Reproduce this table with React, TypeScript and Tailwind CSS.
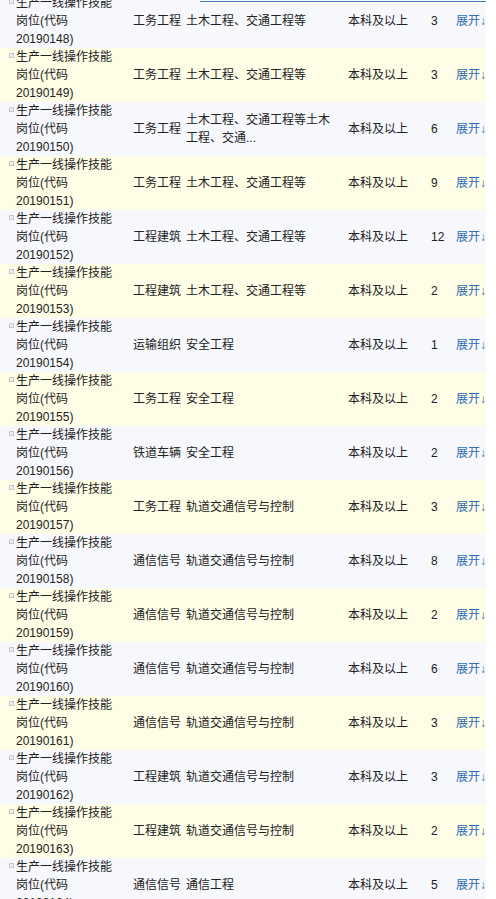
type Row = {
  code: string;
  dept: string;
  major: string[];
  edu: string;
  count: number;
};

const rows: Row[] = [
  { code: "20190148", dept: "工务工程", major: ["土木工程、交通工程等"], edu: "本科及以上", count: 3 },
  { code: "20190149", dept: "工务工程", major: ["土木工程、交通工程等"], edu: "本科及以上", count: 3 },
  { code: "20190150", dept: "工务工程", major: ["土木工程、交通工程等土木", "工程、交通..."], edu: "本科及以上", count: 6 },
  { code: "20190151", dept: "工务工程", major: ["土木工程、交通工程等"], edu: "本科及以上", count: 9 },
  { code: "20190152", dept: "工程建筑", major: ["土木工程、交通工程等"], edu: "本科及以上", count: 12 },
  { code: "20190153", dept: "工程建筑", major: ["土木工程、交通工程等"], edu: "本科及以上", count: 2 },
  { code: "20190154", dept: "运输组织", major: ["安全工程"], edu: "本科及以上", count: 1 },
  { code: "20190155", dept: "工务工程", major: ["安全工程"], edu: "本科及以上", count: 2 },
  { code: "20190156", dept: "铁道车辆", major: ["安全工程"], edu: "本科及以上", count: 2 },
  { code: "20190157", dept: "工务工程", major: ["轨道交通信号与控制"], edu: "本科及以上", count: 3 },
  { code: "20190158", dept: "通信信号", major: ["轨道交通信号与控制"], edu: "本科及以上", count: 8 },
  { code: "20190159", dept: "通信信号", major: ["轨道交通信号与控制"], edu: "本科及以上", count: 2 },
  { code: "20190160", dept: "通信信号", major: ["轨道交通信号与控制"], edu: "本科及以上", count: 6 },
  { code: "20190161", dept: "通信信号", major: ["轨道交通信号与控制"], edu: "本科及以上", count: 3 },
  { code: "20190162", dept: "工程建筑", major: ["轨道交通信号与控制"], edu: "本科及以上", count: 3 },
  { code: "20190163", dept: "工程建筑", major: ["轨道交通信号与控制"], edu: "本科及以上", count: 2 },
  { code: "20190164", dept: "通信信号", major: ["通信工程"], edu: "本科及以上", count: 5 },
];

function JobRow({ row, striped }: { readonly row: Row; readonly striped: boolean }) {
  return (
    <div
      className={`grid h-[54px] grid-cols-[130px_53px_157px_85px_28px_33px] items-center ${
        striped ? "bg-[#fefde6]" : "bg-[#f7f8fc]"
      }`}
    >
      <div className="relative flex h-full flex-col justify-center pl-[16px]">
        <span className="absolute left-[9px] top-[5px] h-[5px] w-[5px] border border-[#c9c9c9] bg-[#efefef]" />
        <span>生产一线操作技能</span>
        <span>岗位(代码</span>
        <span>{row.code})</span>
      </div>
      <div className="pl-[3px]">{row.dept}</div>
      <div className="flex flex-col pl-[3px]">
        {row.major.map((m) => (
          <span key={m}>{m}</span>
        ))}
      </div>
      <div className="pl-[8px]">{row.edu}</div>
      <div className="pl-[6px]">{row.count}</div>
      <div className="whitespace-nowrap pl-[3px] text-[#2f6db3]">展开↓</div>
    </div>
  );
}

export default function App() {
  return (
    <div className="relative h-[899px] w-[496px] overflow-hidden bg-white font-['Liberation_Sans','Noto_Sans_CJK_SC',sans-serif] text-[12px] leading-[18px] text-[#222]">
      <div className="-mt-[6px] w-[486px]">
        {rows.map((row, i) => (
          <JobRow key={row.code} row={row} striped={i % 2 === 1} />
        ))}
      </div>
      <div className="absolute left-[200px] top-[1px] h-px w-[286px] bg-[#4a78b8]" />
    </div>
  );
}
